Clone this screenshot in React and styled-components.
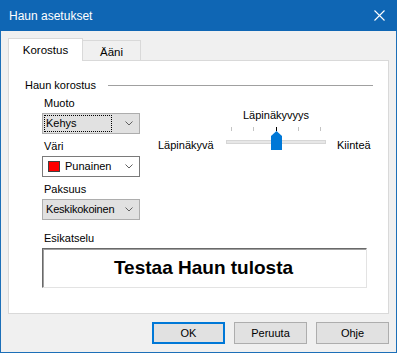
import React from 'react';
import styled, { createGlobalStyle } from 'styled-components';

const GlobalStyle = createGlobalStyle`
  html, body {
    margin: 0;
    padding: 0;
    background: #f0f0f0;
  }
  * {
    box-sizing: border-box;
  }
`;

const Window = styled.div`
  width: 397px;
  height: 353px;
  border: 1px solid #1c6fb8;
  border-top: none;
  background: #f0f0f0;
  font-family: "Liberation Sans", Arial, sans-serif;
  font-size: 11px;
  color: #000;
  display: flex;
  flex-direction: column;
`;

const TitleBar = styled.div`
  height: 31px;
  margin: 0 -1px;
  background: #0f66b4;
  color: #fff;
  font-size: 12px;
  display: flex;
  align-items: center;
  justify-content: space-between;
  padding: 0 12px 0 9px;
`;

const CloseIcon = styled.svg`
  width: 11px;
  height: 11px;
  display: block;
`;

const Body = styled.div`
  flex: 1;
  padding: 7px 7px 0 7px;
  display: flex;
  flex-direction: column;
`;

const TabRow = styled.div`
  display: flex;
  align-items: flex-end;
  height: 23px;
  position: relative;
  z-index: 1;
`;

const Tab = styled.div`
  height: ${p => (p.$active ? '23px' : '21px')};
  width: ${p => p.$width}px;
  border: 1px solid #d9d9d9;
  border-bottom: ${p => (p.$active ? 'none' : '1px solid #d9d9d9')};
  border-left: ${p => (p.$first || p.$active ? '1px solid #d9d9d9' : 'none')};
  background: ${p => (p.$active ? '#fff' : '#f0f0f0')};
  display: flex;
  align-items: center;
  justify-content: center;
  padding-top: ${p => (p.$active ? '0' : '2px')};
  font-size: 11.5px;
`;

const Panel = styled.div`
  width: 381px;
  height: 254px;
  margin-top: -1px;
  background: #fff;
  border: 1px solid #d9d9d9;
  padding: 17px 0 0 16px;
  display: flex;
  flex-direction: column;
`;

const GroupHeader = styled.div`
  display: flex;
  align-items: center;
  height: 14px;
  line-height: 14px;
  padding-right: 15px;
  gap: 12px;
`;

const GroupLine = styled.div`
  flex: 1;
  height: 1px;
  background: #a0a0a0;
`;

const Settings = styled.div`
  display: flex;
  padding-left: 17px;
  margin-top: 4px;
`;

const LeftColumn = styled.div`
  width: 98px;
  display: flex;
  flex-direction: column;
  gap: 5px;
`;

const Field = styled.div`
  display: flex;
  flex-direction: column;
`;

const FieldLabel = styled.div`
  height: 14px;
  line-height: 14px;
  margin: 0 0 3px 2px;
`;

const Combo = styled.div`
  height: 21px;
  border: 1px solid ${p => (p.$white ? '#7a7a7a' : '#adadad')};
  background: ${p => (p.$white ? '#fff' : '#e1e1e1')};
  display: flex;
  align-items: center;
  padding: 0 6px 0 ${p => (p.$white ? '3px' : '1px')};
`;

const ComboText = styled.div`
  flex: 1;
  min-width: 0;
  height: 17px;
  line-height: 15px;
  padding-left: 1px;
  margin-right: ${p => (p.$focus ? '13px' : '6px')};
  border: 1px ${p => (p.$focus ? 'dotted #000' : 'solid transparent')};
  display: flex;
  align-items: center;
  gap: 5px;
  white-space: nowrap;
  letter-spacing: ${p => (p.$tight ? '-0.2px' : '0')};
`;

const Swatch = styled.span`
  width: 12px;
  height: 11px;
  flex: none;
  background: #ff0000;
  border: 1px solid #404040;
  display: inline-block;
`;

const Chevron = styled.svg`
  width: 8px;
  height: 5px;
  flex: none;
  display: block;
`;

const RightBlock = styled.div`
  margin-left: 18px;
  margin-top: 12px;
  display: flex;
  flex-direction: column;
`;

const SliderTitle = styled.div`
  height: 14px;
  line-height: 14px;
  margin-left: 68px;
  width: 100px;
  text-align: center;
`;

const SliderRow = styled.div`
  display: flex;
  align-items: center;
  margin-top: 4px;
`;

const SideLabel = styled.div`
  width: ${p => p.$width}px;
  line-height: 14px;
  padding-top: 12px;
`;

const Track = styled.div`
  position: relative;
  width: 100px;
  height: 25px;
  margin-right: 11px;
`;

const TrackBar = styled.div`
  position: absolute;
  left: 0;
  right: 0;
  top: 13px;
  height: 4px;
  background: #e7e7e7;
  border: 1px solid #d6d6d6;
`;

const Tick = styled.div`
  position: absolute;
  top: 0;
  width: 1px;
  height: 4px;
  background: ${p => (p.$dark ? '#000' : '#c4c4c4')};
`;

const Thumb = styled.svg`
  position: absolute;
  left: 45px;
  top: 4px;
  width: 11px;
  height: 19px;
`;

const Preview = styled.div`
  margin: 11px 0 0 17px;
  display: flex;
  flex-direction: column;
`;

const PreviewBox = styled.div`
  width: 325px;
  height: 40px;
  border-top: 1px solid #696969;
  border-left: 1px solid #696969;
  border-right: 1px solid #e3e3e3;
  border-bottom: 1px solid #e3e3e3;
  box-shadow: inset 1px 1px 0 #a0a0a0;
  display: flex;
  align-items: center;
  justify-content: center;
  font-size: 19px;
  font-weight: bold;
  padding: 0 2px 1px 0;
`;

const ButtonRow = styled.div`
  display: flex;
  justify-content: flex-end;
  gap: 9px;
  margin-top: 8px;
`;

const Button = styled.div`
  width: 73px;
  height: 22px;
  background: #e1e1e1;
  border: 1px solid ${p => (p.$default ? '#0078d7' : '#adadad')};
  box-shadow: ${p => (p.$default ? 'inset 0 0 0 1px #0078d7' : 'none')};
  display: flex;
  align-items: center;
  justify-content: center;
  font-size: 11px;
`;

const ChevronIcon = () => (
  <Chevron viewBox="0 0 8 5">
    <path d="M0.5 0.5 L4 4 L7.5 0.5" fill="none" stroke="#606060" strokeWidth="1" />
  </Chevron>
);

const ticks = [5, 27, 50, 72, 94];

export default function App() {
  return (
    <>
      <GlobalStyle />
      <Window>
        <TitleBar>
          <span>Haun asetukset</span>
          <CloseIcon viewBox="0 0 11 11">
            <path d="M0.5 0.5 L10.5 10.5 M10.5 0.5 L0.5 10.5" stroke="#fff" strokeWidth="1.1" />
          </CloseIcon>
        </TitleBar>
        <Body>
          <TabRow>
            <Tab $active $first $width={75}>Korostus</Tab>
            <Tab $width={58}>Ääni</Tab>
          </TabRow>
          <Panel>
            <GroupHeader>
              <span>Haun korostus</span>
              <GroupLine />
            </GroupHeader>
            <Settings>
              <LeftColumn>
                <Field>
                  <FieldLabel>Muoto</FieldLabel>
                  <Combo>
                    <ComboText $focus>Kehys</ComboText>
                    <ChevronIcon />
                  </Combo>
                </Field>
                <Field>
                  <FieldLabel>Väri</FieldLabel>
                  <Combo $white>
                    <ComboText>
                      <Swatch />
                      Punainen
                    </ComboText>
                    <ChevronIcon />
                  </Combo>
                </Field>
                <Field>
                  <FieldLabel>Paksuus</FieldLabel>
                  <Combo>
                    <ComboText $tight>Keskikokoinen</ComboText>
                    <ChevronIcon />
                  </Combo>
                </Field>
              </LeftColumn>
              <RightBlock>
                <SliderTitle>Läpinäkyvyys</SliderTitle>
                <SliderRow>
                  <SideLabel $width={68}>Läpinäkyvä</SideLabel>
                  <Track>
                    {ticks.map(x => (
                      <Tick key={x} $dark={x === 50} style={{ left: x }} />
                    ))}
                    <TrackBar />
                    <Thumb viewBox="0 0 11 19">
                      <path d="M5.5 0 L11 5 L11 19 L0 19 L0 5 Z" fill="#0078d7" />
                    </Thumb>
                  </Track>
                  <SideLabel>Kiinteä</SideLabel>
                </SliderRow>
              </RightBlock>
            </Settings>
            <Preview>
              <FieldLabel>Esikatselu</FieldLabel>
              <PreviewBox>Testaa Haun tulosta</PreviewBox>
            </Preview>
          </Panel>
          <ButtonRow>
            <Button $default>OK</Button>
            <Button>Peruuta</Button>
            <Button>Ohje</Button>
          </ButtonRow>
        </Body>
      </Window>
    </>
  );
}
